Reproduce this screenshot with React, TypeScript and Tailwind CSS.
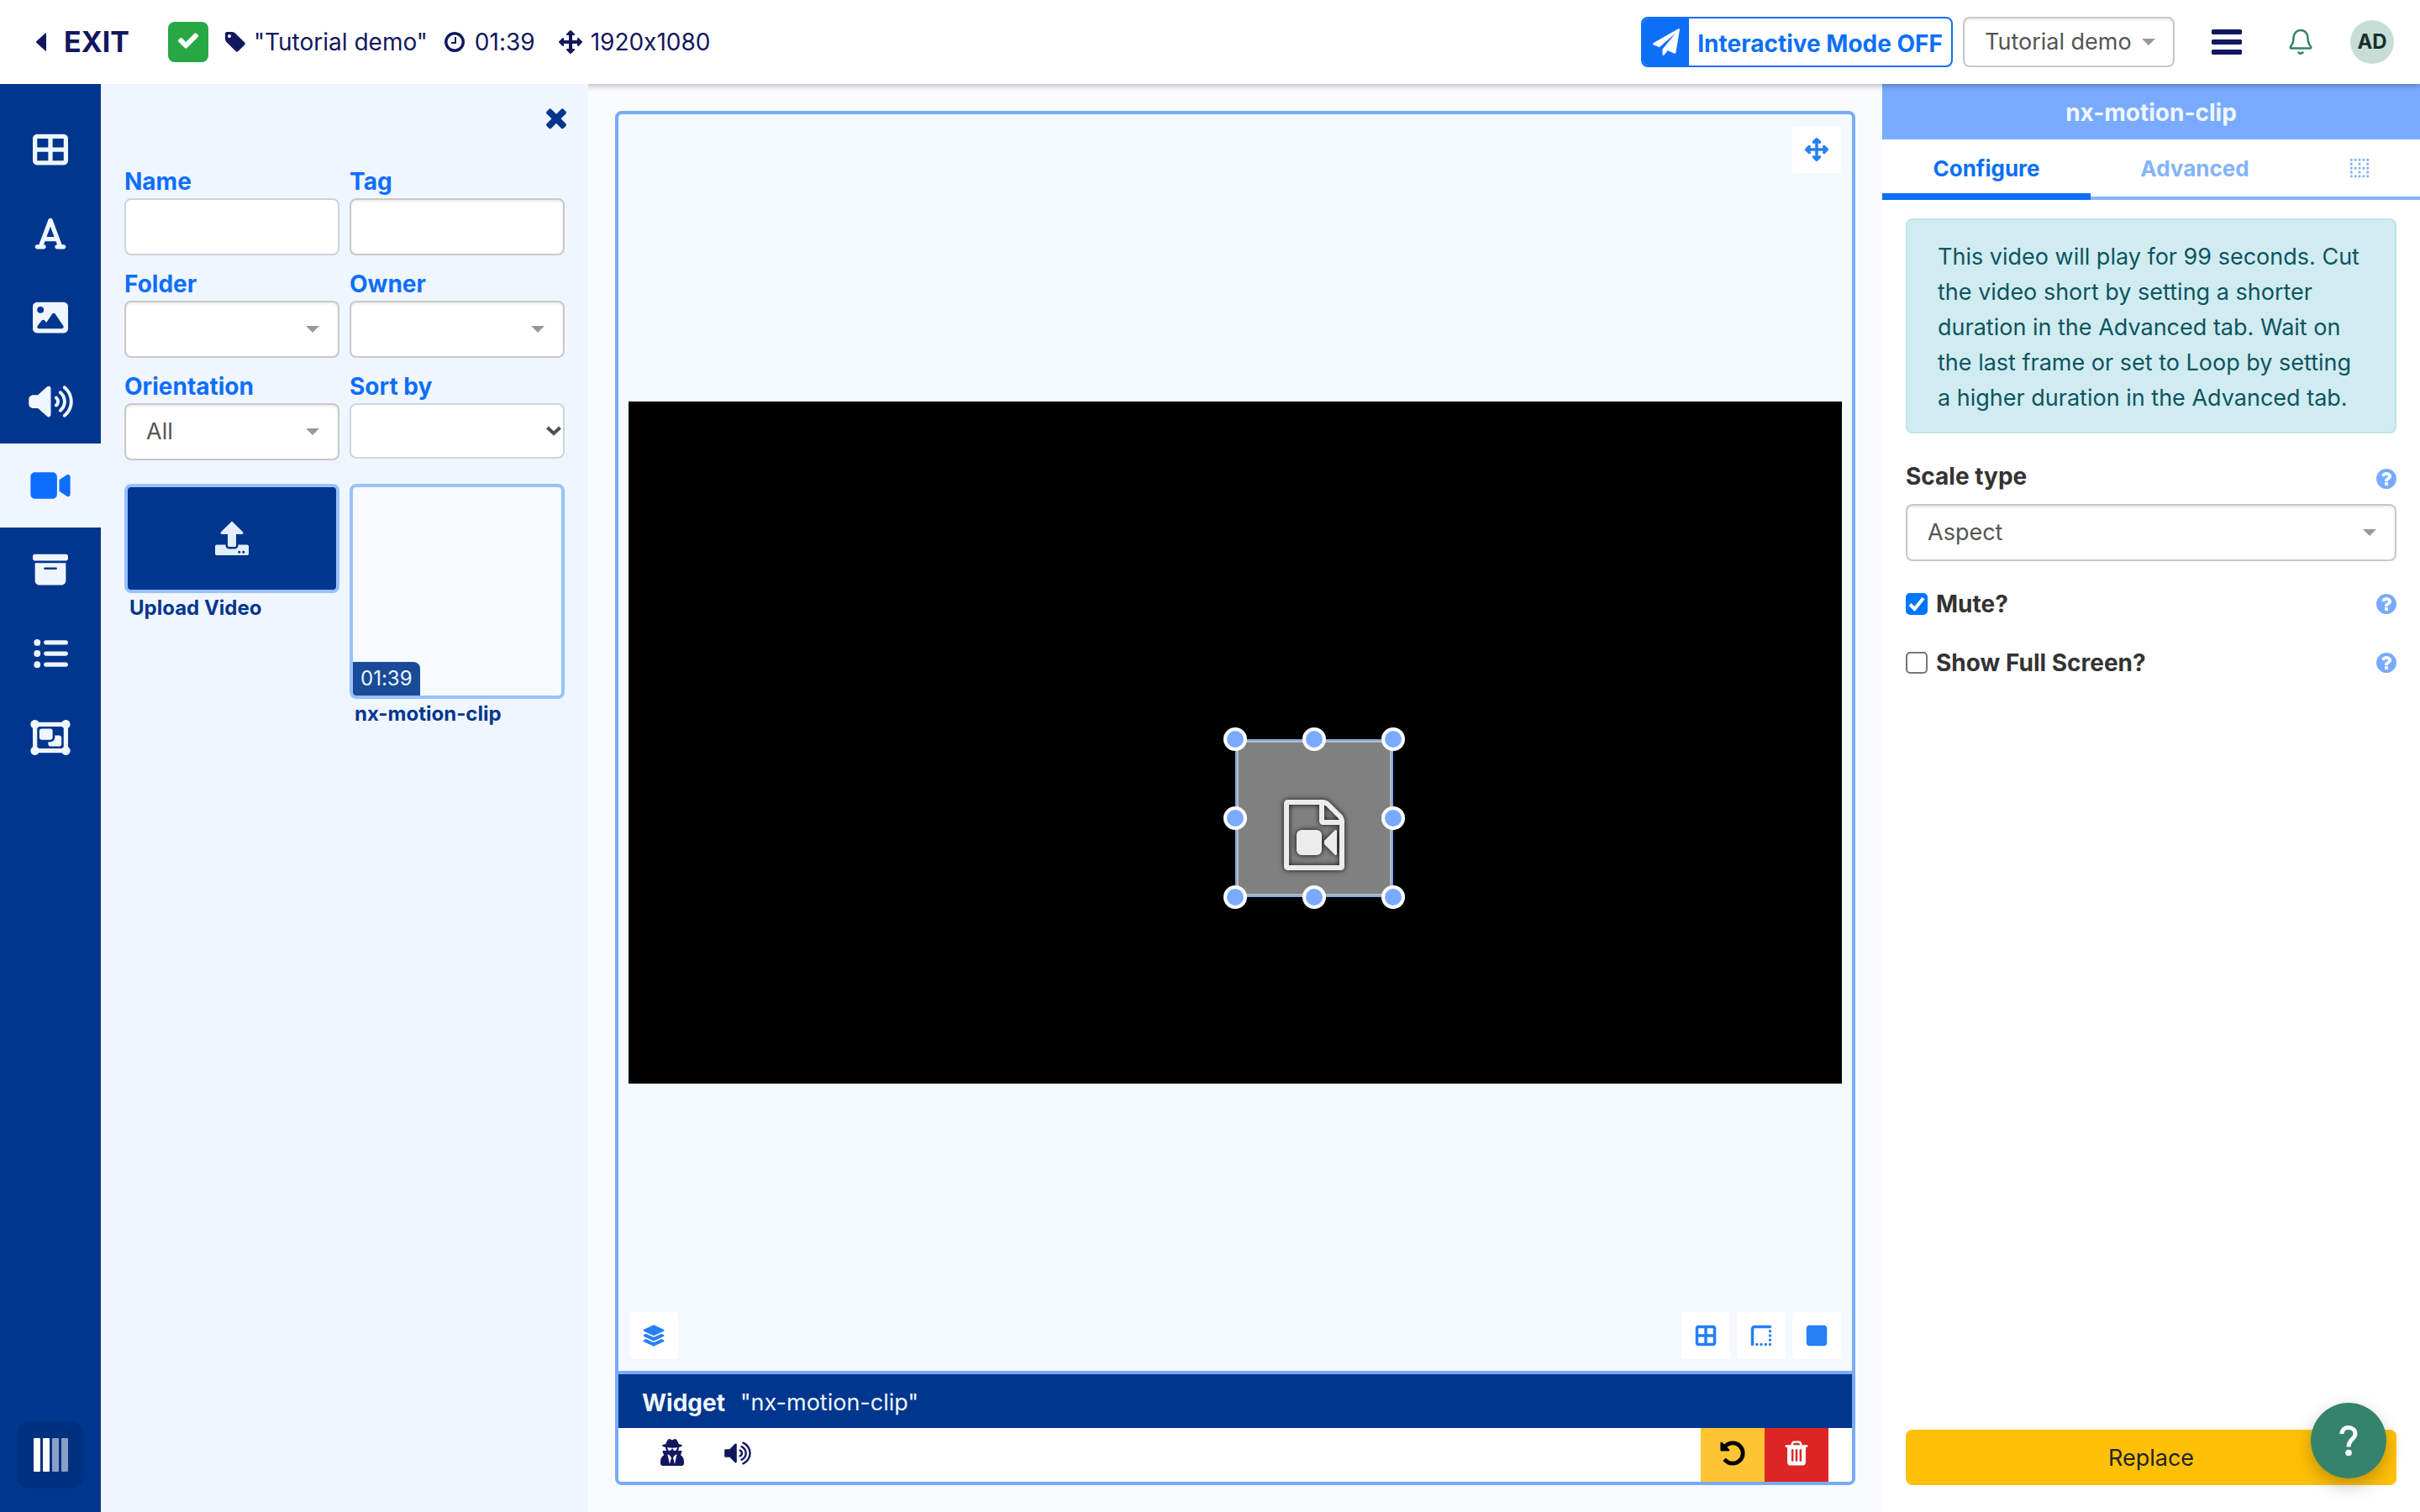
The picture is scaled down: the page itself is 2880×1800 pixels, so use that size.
import { useState, type ReactNode } from 'react'
import { clsx } from 'clsx'
import { FaUpload, FaUserSecret } from 'react-icons/fa'
import {
  FaBorderAll,
  FaBorderNone,
  FaBorderTopLeft,
  FaBoxArchive,
  FaFont,
  FaImage,
  FaLayerGroup,
  FaListUl,
  FaArrowsUpDownLeftRight,
  FaObjectGroup,
  FaSquare,
  FaTableCellsLarge,
  FaVideo,
  FaVolumeHigh,
} from 'react-icons/fa6'

const paths = {
  check:
    'M1671 566q0 40-28 68l-724 724-136 136q-28 28-68 28t-68-28l-136-136-362-362q-28-28-28-68t28-68l136-136q28-28 68-28t68 28l294 295 656-657q28-28 68-28t68 28l136 136q28 28 28 68z',
  times:
    'M1490 1322q0 40-28 68l-136 136q-28 28-68 28t-68-28l-294-294-294 294q-28 28-68 28t-68-28l-136-136q-28-28-28-68t28-68l294-294-294-294q-28-28-28-68t28-68l136-136q28-28 68-28t68 28l294 294 294-294q28-28 68-28t68 28l136 136q28 28 28 68t-28 68l-294 294 294 294q28 28 28 68z',
  tag: 'M576 448q0-53-37.5-90.5t-90.5-37.5-90.5 37.5-37.5 90.5 37.5 90.5 90.5 37.5 90.5-37.5 37.5-90.5zm1067 576q0 53-37 90l-491 492q-39 37-91 37-53 0-90-37l-715-716q-38-37-64.5-101t-26.5-117v-416q0-52 38-90t90-38h416q53 0 117 26.5t102 64.5l715 714q37 39 37 91z',
  clock:
    'M1024 544v448q0 14-9 23t-23 9h-320q-14 0-23-9t-9-23v-64q0-14 9-23t23-9h224v-352q0-14 9-23t23-9h64q14 0 23 9t9 23zm416 352q0-148-73-273t-198-198-273-73-273 73-198 198-73 273 73 273 198 198 273 73 273-73 198-198 73-273zm224 0q0 209-103 385.5t-279.5 279.5-385.5 103-385.5-103-279.5-279.5-103-385.5 103-385.5 279.5-279.5 385.5-103 385.5 103 279.5 279.5 103 385.5z',
  arrows:
    'M1792 896q0 26-19 45l-256 256q-19 19-45 19t-45-19-19-45v-128h-384v384h128q26 0 45 19t19 45-19 45l-256 256q-19 19-45 19t-45-19l-256-256q-19-19-19-45t19-45 45-19h128v-384h-384v128q0 26-19 45t-45 19-45-19l-256-256q-19-19-19-45t19-45l256-256q19-19 45-19t45 19 19 45v128h384v-384h-128q-26 0-45-19t-19-45 19-45l256-256q19-19 45-19t45 19l256 256q19 19 19 45t-19 45-45 19h-128v384h384v-128q0-26 19-45t45-19 45 19l256 256q19 19 19 45z',
  help: 'M1024 1376v-192q0-14-9-23t-23-9h-192q-14 0-23 9t-9 23v192q0 14 9 23t23 9h192q14 0 23-9t9-23zm256-672q0-88-55.5-163t-138.5-116-170-41q-243 0-371 213-15 24 8 42l132 100q7 6 19 6 16 0 25-12 53-68 86-92 34-24 86-24 48 0 85.5 26t37.5 59q0 38-20 61t-68 45q-63 28-115.5 86.5t-52.5 125.5v36q0 14 9 23t23 9h192q14 0 23-9t9-23q0-19 21.5-49.5t54.5-49.5q32-18 49-28.5t46-35 44.5-48 28-60.5 12.5-81zm384 192q0 209-103 385.5t-279.5 279.5-385.5 103-385.5-103-279.5-279.5-103-385.5 103-385.5 279.5-279.5 385.5-103 385.5 103 279.5 279.5 103 385.5z',
  plane:
    'M1764 11q33 24 27 64l-256 1536q-5 29-32 45-14 8-31 8-11 0-24-5l-453-185-242 295q-18 23-49 23-13 0-22-4-19-7-30.5-23.5t-11.5-36.5v-349l864-1059-1069 925-395-162q-37-14-40-55-2-40 32-59l1664-960q15-9 32-9 20 0 36 11z',
  undo: 'M1664 896q0 156-61 298t-164 245-245 164-298 61q-172 0-327-72.5t-264-204.5q-7-10-6.5-22.5t8.5-20.5l137-138q10-9 25-9 16 2 23 12 73 95 179 147t225 52q104 0 198.5-40.5t163.5-109.5 109.5-163.5 40.5-198.5-40.5-198.5-109.5-163.5-163.5-109.5-198.5-40.5q-98 0-188 35.5t-160 101.5l137 138q31 30 14 69-17 40-59 40h-448q-26 0-45-19t-19-45v-448q0-42 40-59 39-17 69 14l130 129q107-101 244.5-156.5t284.5-55.5q156 0 298 61t245 164 164 245 61 298z',
  trash:
    'M704 1376v-704q0-14-9-23t-23-9h-64q-14 0-23 9t-9 23v704q0 14 9 23t23 9h64q14 0 23-9t9-23zm256 0v-704q0-14-9-23t-23-9h-64q-14 0-23 9t-9 23v704q0 14 9 23t23 9h64q14 0 23-9t9-23zm256 0v-704q0-14-9-23t-23-9h-64q-14 0-23 9t-9 23v704q0 14 9 23t23 9h64q14 0 23-9t9-23zm-544-992h448l-48-117q-7-9-17-11h-317q-10 2-17 11zm928 32v64q0 14-9 23t-23 9h-96v948q0 83-47 143.5t-113 60.5h-832q-66 0-113-58.5t-47-141.5v-952h-96q-14 0-23-9t-9-23v-64q0-14 9-23t23-9h309l70-167q15-37 54-63t79-26h320q40 0 79 26t54 63l70 167h309q14 0 23 9t9 23z',
  volume:
    'M832 352v1088q0 26-19 45t-45 19-45-19l-333-333h-262q-26 0-45-19t-19-45v-384q0-26 19-45t45-19h262l333-333q19-19 45-19t45 19 19 45zm384 544q0 76-42.5 141.5t-112.5 93.5q-10 5-25 5-26 0-45-18.5t-19-45.5q0-21 12-35.5t29-25 34-23 29-35.5 12-57-12-57-29-35.5-34-23-29-25-12-35.5q0-27 19-45.5t45-18.5q15 0 25 5 70 27 112.5 93t42.5 142zm256 0q0 153-85 282.5t-225 188.5q-13 5-25 5-27 0-46-19t-19-45q0-39 39-59 56-29 76-44 74-54 115.5-135.5t41.5-173.5-41.5-173.5-115.5-135.5q-20-15-76-44-39-20-39-59 0-26 19-45t45-19q13 0 26 5 140 59 225 188.5t85 282.5zm256 0q0 230-127 422.5t-338 283.5q-13 5-26 5-26 0-45-19t-19-45q0-36 39-59 7-4 22.5-10.5t22.5-10.5q46-25 82-51 123-91 192-227t69-289-69-289-192-227q-36-26-82-51-7-4-22.5-10.5t-22.5-10.5q-39-23-39-59 0-26 19-45t45-19q13 0 26 5 211 91 338 283.5t127 422.5z',
  fileVideo:
    'M1596 380q28 28 48 76t20 88v1152q0 40-28 68t-68 28h-1344q-40 0-68-28t-28-68v-1600q0-40 28-68t68-28h896q40 0 88 20t76 48zm-444-244v376h376q-10-29-22-41l-313-313q-12-12-41-22zm384 1528v-1024h-416q-40 0-68-28t-28-68v-416h-768v1536h1280zm-576-896q52 0 90 38t38 90v384q0 52-38 90t-90 38h-384q-52 0-90-38t-38-90v-384q0-52 38-90t90-38h384zm492 2q20 8 20 30v576q0 22-20 30-8 2-12 2-14 0-23-9l-265-266v-90l265-266q9-9 23-9 4 0 12 2z',
  bars: 'M1664 1344v128q0 26-19 45t-45 19h-1408q-26 0-45-19t-19-45v-128q0-26 19-45t45-19h1408q26 0 45 19t19 45zm0-512v128q0 26-19 45t-45 19h-1408q-26 0-45-19t-19-45v-128q0-26 19-45t45-19h1408q26 0 45 19t19 45zm0-512v128q0 26-19 45t-45 19h-1408q-26 0-45-19t-19-45v-128q0-26 19-45t45-19h1408q26 0 45 19t19 45z',
}

function Glyph({ name, className }: { name: keyof typeof paths; className?: string }) {
  return (
    <svg viewBox="0 0 1792 1792" fill="currentColor" aria-hidden="true" className={className}>
      <path d={paths[name]} />
    </svg>
  )
}

const fieldClass = 'block h-[68px] w-full rounded-lg border-2 bg-white outline-none'

interface SelectProps {
  id: string
  value?: string
  label?: string
  className?: string
  arrowClass?: string
}

function Select({
  id,
  value = '',
  label,
  className = 'h-[68px] pr-12 pl-6',
  arrowClass = 'right-6',
}: SelectProps) {
  return (
    <div className="relative">
      <select
        id={id}
        aria-label={label}
        defaultValue={value}
        className={clsx(
          'block w-full appearance-none rounded-lg border-2 border-[#c8c8c8] bg-white text-[27px] text-[#555] shadow-[inset_0_2px_3px_rgba(0,0,0,0.08)] outline-none',
          className,
        )}
      >
        <option value={value}>{value}</option>
      </select>
      <svg
        viewBox="0 0 16 8"
        className={clsx('pointer-events-none absolute top-1/2 h-2 w-4 -translate-y-1/2 fill-[#999]', arrowClass)}
        aria-hidden="true"
      >
        <path d="M0 0h16L8 8z" />
      </svg>
    </div>
  )
}

function Field({ id, label, children }: { id: string; label: string; children: ReactNode }) {
  return (
    <div>
      <label htmlFor={id} className="block pt-0.5 leading-10 font-bold text-[#0d6efd]">
        {label}
      </label>
      {children}
    </div>
  )
}

function Header() {
  return (
    <header className="relative z-10 flex h-[100px] items-center justify-between bg-white pr-[31px] pl-[43px] text-[#12175e] shadow-[0_1px_8px_rgba(0,0,0,0.35)]">
      <div className="flex items-center">
        <a href="#exit" className="flex items-center gap-[21px] text-[34px] font-bold">
          <svg viewBox="0 0 12 22" className="h-[22px] w-3 fill-current" aria-hidden="true">
            <path d="M12 1v20q0 1-1 .5L.5 12q-1-1 0-2L11 .5q1-.5 1 .5z" />
          </svg>
          EXIT
        </a>
        <span className="ml-[46px] flex size-12 items-center justify-center rounded-lg bg-[#28a745] pb-1 text-white">
          <Glyph name="check" className="size-7" />
        </span>
        <span className="ml-[18px] flex items-center gap-2">
          <Glyph name="tag" className="size-7" />
          "Tutorial demo"
        </span>
        <span className="ml-[18px] flex items-center gap-2.5">
          <Glyph name="clock" className="size-7" />
          01:39
        </span>
        <span className="ml-7 flex items-center gap-2.5">
          <Glyph name="arrows" className="size-7" />
          1920x1080
        </span>
      </div>
      <div className="flex items-center">
        <button
          type="button"
          className="flex h-[60px] items-stretch overflow-hidden rounded-lg border-2 border-[#0d6ff6] font-bold text-[#0d6ff6]"
        >
          <span className="flex w-[55px] items-center justify-center bg-[#0d6ff6] text-white">
            <Glyph name="plane" className="size-8" />
          </span>
          <span className="self-center px-2.5 pt-1">Interactive Mode OFF</span>
        </button>
        <div className="ml-3 w-[252px]">
          <Select
            id="layout"
            label="Layout"
            value="Tutorial demo"
            className="h-[60px] pr-10 pl-6"
            arrowClass="right-[23px]"
          />
        </div>
        <button type="button" aria-label="Menu" className="ml-[41px]">
          <Glyph name="bars" className="size-[42px]" />
        </button>
        <button type="button" aria-label="Notifications" className="ml-[53px]">
          <svg
            viewBox="0 0 28 32"
            className="h-8 w-7 text-[#34836b]"
            fill="none"
            stroke="currentColor"
            strokeWidth="2.5"
            strokeLinejoin="round"
            aria-hidden="true"
          >
            <path d="M14 2C9 2 5.500 6 5.500 11C5.500 17 4 19 2 21.500C1.400 22.600 1.800 23.500 3 23.500H25C26.200 23.500 26.600 22.600 26 21.500C24 19 22.500 17 22.500 11C22.500 6 19 2 14 2Z" />
            <path d="M11.500 28.500Q14 31 16.500 28.500" strokeLinecap="round" />
          </svg>
        </button>
        <button
          type="button"
          className="ml-[45px] flex size-[52px] items-center justify-center rounded-full bg-[#c8ddd5] text-[24px] font-bold text-[#15302b]"
        >
          AD
        </button>
      </div>
    </header>
  )
}

const tools = [
  { name: 'Layout templates', icon: <FaTableCellsLarge className="size-[42px]" /> },
  { name: 'Text', icon: <FaFont className="size-[42px]" /> },
  { name: 'Images', icon: <FaImage className="size-[42px]" /> },
  { name: 'Audio', icon: <FaVolumeHigh className="h-[42px] w-[53px]" /> },
  { name: 'Video', icon: <FaVideo className="h-[42px] w-12" /> },
  { name: 'Library', icon: <FaBoxArchive className="size-[42px]" /> },
  { name: 'Playlists', icon: <FaListUl className="size-[42px]" /> },
  { name: 'Interactive', icon: <FaObjectGroup className="h-[42px] w-12" /> },
]

function Rail() {
  const [active, setActive] = useState('Video')
  return (
    <nav className="flex w-[120px] shrink-0 flex-col items-center bg-[#00368d] pt-7 pb-7">
      {tools.map((tool) => (
        <button
          key={tool.name}
          type="button"
          aria-label={tool.name}
          onClick={() => setActive(tool.name)}
          className={clsx(
            'flex h-[100px] w-full items-center justify-center',
            tool.name === active ? 'bg-[#f0f6ff] text-[#0d6efd]' : 'text-[#f0f6ff]',
          )}
        >
          {tool.icon}
        </button>
      ))}
      <button
        type="button"
        aria-label="Collapse"
        className="mt-auto flex size-20 items-center justify-center gap-[3px] rounded-2xl bg-[#003080]"
      >
        <span className="h-10 w-2 rounded-[1px] bg-white" />
        <span className="h-10 w-2 rounded-[1px] bg-white" />
        <span className="h-10 w-2 rounded-[1px] bg-[#8a9fc8]" />
        <span className="h-10 w-2 rounded-[1px] bg-[#8a9fc8]" />
      </button>
    </nav>
  )
}

function LibraryPanel() {
  return (
    <aside className="flex w-[580px] shrink-0 flex-col bg-[#f0f6ff] px-7 pt-[22px]">
      <button type="button" aria-label="Close" className="-mr-2 self-end text-[#00368d]">
        <Glyph name="times" className="size-9" />
      </button>
      <div className="mt-9 grid grid-cols-2 gap-3">
        <Field id="name" label="Name">
          <input id="name" type="text" className={clsx(fieldClass, 'border-[#ced4da] px-6')} />
        </Field>
        <Field id="tag" label="Tag">
          <input
            id="tag"
            type="text"
            className={clsx(fieldClass, 'border-[#c8c8c8] px-6 shadow-[inset_0_2px_3px_rgba(0,0,0,0.08)]')}
          />
        </Field>
        <Field id="folder" label="Folder">
          <Select id="folder" />
        </Field>
        <Field id="owner" label="Owner">
          <Select id="owner" />
        </Field>
        <Field id="orientation" label="Orientation">
          <Select id="orientation" value="All" />
        </Field>
        <Field id="sort" label="Sort by">
          <div className="relative">
            <select
              id="sort"
              className="block h-[66px] w-full appearance-none rounded-lg border-2 border-[#ced4da] bg-white pl-6 outline-none"
            >
              <option />
            </select>
            <svg
              viewBox="0 0 18 12"
              className="pointer-events-none absolute top-1/2 right-1 h-3 w-[18px] -translate-y-1/2"
              fill="none"
              stroke="#495057"
              strokeWidth="4"
              aria-hidden="true"
            >
              <path d="M1.500 2 9 9l7.500-7" />
            </svg>
          </div>
        </Field>
      </div>
      <div className="mt-7 grid grid-cols-2 items-start gap-3 text-[24px] font-bold text-[#00368d]">
        <button type="button" className="text-left">
          <span className="flex h-[130px] items-center justify-center rounded-lg border-4 border-[#98c1ff] bg-[#00368d] text-[#e3eeff]">
            <FaUpload className="size-10" />
          </span>
          <span className="block px-1.5 leading-9">Upload Video</span>
        </button>
        <button type="button" className="text-left">
          <span className="flex aspect-square items-end overflow-hidden rounded-lg border-4 border-[#98c1ff] bg-[#f7faff]">
            <span className="rounded-tr-lg bg-[#194b99] px-[9px] leading-10 font-normal text-[#f0f6ff]">01:39</span>
          </span>
          <span className="block px-1.5 leading-9">nx-motion-clip</span>
        </button>
      </div>
    </aside>
  )
}

const handles = [
  'top-0 left-0',
  'top-0 left-1/2',
  'top-0 left-full',
  'top-1/2 left-0',
  'top-1/2 left-full',
  'top-full left-0',
  'top-full left-1/2',
  'top-full left-full',
]

function CanvasButton({ label, children }: { label: string; children: ReactNode }) {
  return (
    <button
      type="button"
      aria-label={label}
      className="flex h-14 w-[58px] items-center justify-center rounded bg-white text-[#267ff5]"
    >
      {children}
    </button>
  )
}

function Viewer() {
  return (
    <main className="flex min-w-0 flex-1 flex-col bg-[#fafbfe] p-8">
      <div className="flex flex-1 flex-col overflow-hidden rounded-lg border-4 border-[#78abfc] bg-[#f4f8ff]">
        <div className="flex flex-1 flex-col justify-between py-3.5">
          <div className="flex justify-end px-[13px]">
            <CanvasButton label="Move">
              <FaArrowsUpDownLeftRight className="size-7" />
            </CanvasButton>
          </div>
          <div className="relative mx-3 aspect-video bg-black">
            <div className="absolute top-[402px] left-1/2 size-[188px]">
              <div className="size-full border-2 border-[#83a9e3] bg-[#808080]">
                <div className="flex size-full items-end justify-center border-2 border-[#b5bbc4] pb-7">
                  <Glyph
                    name="fileVideo"
                    className="size-[84px] text-[#ececec] drop-shadow-[0_0_3px_rgba(0,0,0,0.9)]"
                  />
                </div>
              </div>
              {handles.map((place) => (
                <span
                  key={place}
                  className={clsx(
                    'absolute size-7 -translate-x-1/2 -translate-y-1/2 rounded-full border-4 border-white bg-[#78abff]',
                    place,
                  )}
                />
              ))}
            </div>
          </div>
          <div className="flex justify-between px-[13px]">
            <CanvasButton label="Layers">
              <FaLayerGroup className="size-7" />
            </CanvasButton>
            <div className="flex gap-2">
              <CanvasButton label="Grid">
                <FaBorderAll className="size-7" />
              </CanvasButton>
              <CanvasButton label="Snap to borders">
                <FaBorderTopLeft className="size-7" />
              </CanvasButton>
              <CanvasButton label="Snap to elements">
                <FaSquare className="size-7" />
              </CanvasButton>
            </div>
          </div>
        </div>
        <div className="flex h-[68px] items-center gap-[18px] border-t-4 border-[#78abfc] bg-[#00368d] px-7 pt-1 text-[#f0f6ff]">
          <strong>Widget</strong>
          <span className="text-[27px]">"nx-motion-clip"</span>
        </div>
        <div className="flex h-16 items-stretch bg-white pr-7 pl-12 text-[#12175e]">
          <button type="button" aria-label="Permissions" className="flex w-8 items-center justify-center pb-1.5">
            <FaUserSecret className="size-8" />
          </button>
          <button type="button" aria-label="Audio" className="ml-[45px] flex items-center pb-1">
            <Glyph name="volume" className="size-[34px]" />
          </button>
          <button
            type="button"
            aria-label="Undo"
            className="ml-auto flex w-[76px] items-center justify-center bg-[#fdc533] pb-1 text-black"
          >
            <Glyph name="undo" className="size-[34px]" />
          </button>
          <button
            type="button"
            aria-label="Delete"
            className="flex w-[76px] items-center justify-center bg-[#dc2626] pb-1 text-white"
          >
            <Glyph name="trash" className="size-[34px]" />
          </button>
        </div>
      </div>
    </main>
  )
}

function Help() {
  return <Glyph name="help" className="-mr-0.5 size-7 shrink-0 text-[#78abff]" />
}

function CheckRow({ id, label, checked }: { id: string; label: string; checked?: boolean }) {
  return (
    <div className="flex h-[42px] items-center justify-between">
      <div className="flex items-center gap-2.5">
        <div className="relative flex">
          <input
            id={id}
            type="checkbox"
            defaultChecked={checked}
            className="peer size-[26px] appearance-none rounded-[5px] border-2 border-[#767676] bg-white checked:border-[#0075ff] checked:bg-[#0075ff]"
          />
          <svg
            viewBox="0 0 26 26"
            className="pointer-events-none absolute inset-0 hidden size-full peer-checked:block"
            fill="none"
            stroke="white"
            strokeWidth="4"
            aria-hidden="true"
          >
            <path d="M5 13.500 10.500 19 21 6" />
          </svg>
        </div>
        <label htmlFor={id} className="font-bold">
          {label}
        </label>
      </div>
      <Help />
    </div>
  )
}

function Properties() {
  return (
    <aside className="flex w-[640px] shrink-0 flex-col bg-white text-[#333]">
      <h2 className="flex h-[66px] items-center justify-center bg-[#78abff] pt-0.5 font-bold text-[#f0f6ff]">
        nx-motion-clip
      </h2>
      <div role="tablist" className="flex h-[72px] text-[26px] font-bold text-[#84b4f8]">
        <button
          type="button"
          role="tab"
          aria-selected="true"
          className="w-[248px] border-b-8 border-[#0d6ff6] pt-1.5 text-[#0d6ff6]"
        >
          Configure
        </button>
        <button type="button" role="tab" aria-selected="false" className="w-[248px] border-b-4 border-[#84b4f8] pt-0.5">
          Advanced
        </button>
        <button
          type="button"
          role="tab"
          aria-selected="false"
          aria-label="Appearance"
          className="flex flex-1 items-center justify-center border-b-4 border-[#84b4f8]"
        >
          <FaBorderNone className="size-[26px]" />
        </button>
      </div>
      <div className="flex flex-1 flex-col px-7 pt-[22px] pb-8">
        <p className="rounded-lg border-2 border-[#bee5eb] bg-[#d1ecf1] px-9 pt-[23px] pb-[19px] text-[27px] text-[#0c5460]">
          This video will play for 99 seconds. Cut the video short by setting a shorter duration in the Advanced tab.
          Wait on the last frame or set to Loop by setting a higher duration in the Advanced tab.
        </p>
        <div className="mt-[30px] mb-3 flex items-end justify-between">
          <label htmlFor="scale" className="font-bold">
            Scale type
          </label>
          <div className="pb-1">
            <Help />
          </div>
        </div>
        <Select id="scale" value="Aspect" />
        <div className="mt-[30px] flex flex-col gap-7">
          <CheckRow id="mute" label="Mute?" checked />
          <CheckRow id="fullscreen" label="Show Full Screen?" />
        </div>
        <button type="button" className="mt-auto h-[66px] rounded-lg bg-[#ffc107] pt-0.5 text-[27px] text-[#212529]">
          Replace
        </button>
      </div>
    </aside>
  )
}

export default function App() {
  return (
    <div className="flex min-h-screen flex-col bg-white font-['Inter','Liberation_Sans',sans-serif] text-[28px] leading-[42px] [font-feature-settings:'calt'_0]">
      <Header />
      <div className="flex flex-1">
        <div className="relative z-20 flex">
          <Rail />
          <LibraryPanel />
        </div>
        <Viewer />
        <Properties />
      </div>
      <button
        type="button"
        aria-label="Help"
        className="fixed right-10 bottom-10 z-30 flex size-[90px] items-center justify-center rounded-full bg-[#36836c] shadow-[0_8px_20px_rgba(0,0,0,0.25)]"
      >
        <svg viewBox="0 0 24 38" className="h-[38px] w-6" fill="none" stroke="white" strokeWidth="5" aria-hidden="true">
          <path d="M4 11C4 6 7.500 3.500 12 3.500S20 6.500 20 11C20 17 12 17.500 12 26.500" />
          <circle cx="12" cy="33.500" r="3.800" fill="white" stroke="none" />
        </svg>
      </button>
    </div>
  )
}
